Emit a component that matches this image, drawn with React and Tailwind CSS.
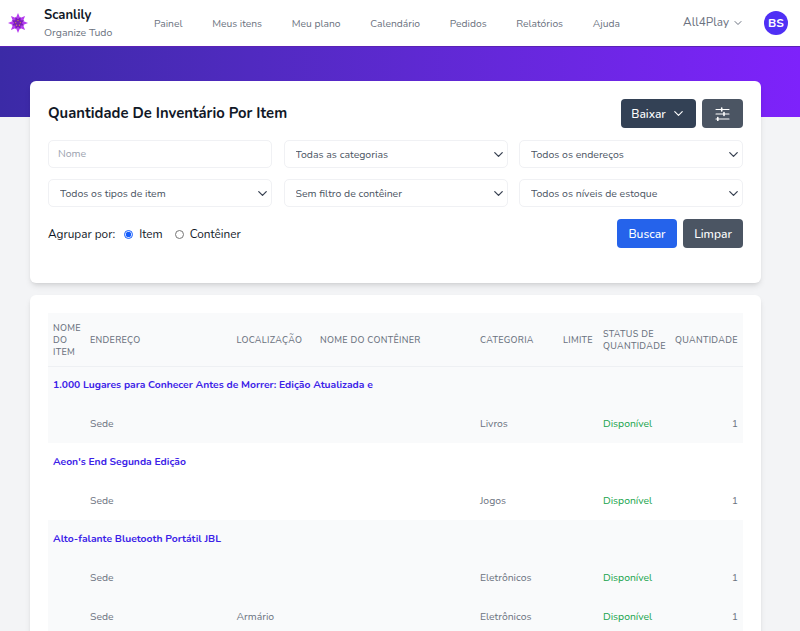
import React from "react";
import { ChevronDown } from "lucide-react";

const navItems = ["Painel", "Meus itens", "Meu plano", "Calendário", "Pedidos", "Relatórios", "Ajuda"];

const filters = [
  "Todas as categorias",
  "Todos os endereços",
  "Todos os tipos de item",
  "Sem filtro de contêiner",
  "Todos os níveis de estoque",
];

const groups = [
  {
    name: "1.000 Lugares para Conhecer Antes de Morrer: Edição Atualizada e",
    rows: [{ place: "", category: "Livros" }],
  },
  { name: "Aeon's End Segunda Edição", rows: [{ place: "", category: "Jogos" }] },
  {
    name: "Alto-falante Bluetooth Portátil JBL",
    rows: [
      { place: "", category: "Eletrônicos" },
      { place: "Armário", category: "Eletrônicos" },
    ],
  },
];

const STAR = "11,1 13.1,5.92 18.07,3.93 16.08,8.9 21,11 16.08,13.1 18.07,18.07 13.1,16.08 11,21 8.9,16.08 3.93,18.07 5.92,13.1 1,11 5.92,8.9 3.93,3.93 8.9,5.92";

const Logo = () => (
  <svg width="22" height="22" viewBox="0 0 22 22" className="shrink-0">
    <polygon fill="#b53df0" points={STAR} />
    <polygon fill="#7a1fb8" points={STAR} transform="rotate(22.5 11 11) translate(3.5 3.5) scale(0.68)" />
    <circle cx="11" cy="8.6" r="0.6" fill="#d9a441" />
    <circle cx="8.7" cy="10.6" r="0.6" fill="#d9a441" />
    <circle cx="13.3" cy="10.6" r="0.6" fill="#d9a441" />
    <circle cx="9.6" cy="13.2" r="0.6" fill="#d9a441" />
    <circle cx="12.4" cy="13.2" r="0.6" fill="#d9a441" />
  </svg>
);

const FilterIcon = () => (
  <svg width="15" height="14" viewBox="0 0 15 14" fill="none" stroke="white" strokeWidth="1.1" strokeLinecap="round">
    <path d="M1 2.5h13M1 7h13M1 12h13" />
    <path d="M6.7 1v3M9 5.5v3M2.8 10.5v3" strokeWidth="1.6" />
  </svg>
);

const FilterSelect = ({ label }) => (
  <div className="relative">
    <select className="w-full h-[28px] appearance-none bg-white border border-[#f0f1f4] rounded-[5px] pl-[11px] pr-6 pt-[1px] text-[10.5px] text-[#4b5563] outline-none">
      <option>{label}</option>
    </select>
    <ChevronDown size={15} strokeWidth={2} className="absolute right-[2px] top-[7px] text-[#374151] pointer-events-none" />
  </div>
);

const App = () => {
  return (
    <div className="h-screen overflow-hidden bg-[#f3f4f6] font-['Nunito','Lato',sans-serif]">
      {/* HEADER */}
      <header className="h-[46px] bg-white flex items-center pl-[7px] pr-[12px]">
        <Logo />
        <div className="ml-[15px] w-[110px]">
          <p className="text-[13px] font-bold text-[#111827] leading-[17px]">Scanlily</p>
          <p className="mt-[2px] text-[10.5px] text-[#6b7280] leading-[14px]">Organize Tudo</p>
        </div>
        <nav className="flex gap-[29.7px] pt-[4px] text-[10.3px] text-[#6b7280]">
          {navItems.map((item) => (
            <a key={item}>{item}</a>
          ))}
        </nav>
        <div className="ml-auto flex items-center">
          <span className="text-[11.8px] text-[#6b7280]">All4Play</span>
          <ChevronDown size={12} strokeWidth={2} className="ml-[3px] text-[#6b7280]" />
          <div className="ml-[20px] w-[24px] h-[24px] rounded-full bg-[#4f2ff5] text-white text-[12px] font-bold flex items-center justify-center">
            BS
          </div>
        </div>
      </header>

      {/* BANNER */}
      <div className="h-[71px] bg-gradient-to-r from-[#3b2aa6] to-[#7e22fb] border-t border-[#5b21b6]" />

      <main className="relative -mt-[36px] px-[30px] mr-[9px]">
        {/* FILTER CARD */}
        <section className="h-[202px] bg-white rounded-[6px] shadow-md p-[18px]">
          <div className="flex items-center justify-between">
            <h1 className="text-[14.8px] font-bold text-[#111827]">Quantidade De Inventário Por Item</h1>
            <div className="flex gap-[6px]">
              <button className="h-[29px] w-[75px] rounded-[4px] bg-[#334155] text-white text-[12px] font-medium flex items-center justify-center gap-[5px]">
                Baixar <ChevronDown size={15} strokeWidth={1.8} />
              </button>
              <button className="h-[29px] w-[41px] rounded-[4px] bg-[#4b5563] flex items-center justify-center">
                <FilterIcon />
              </button>
            </div>
          </div>

          <div className="mt-[12px] grid grid-cols-3 gap-x-[11.5px] gap-y-[11px]">
            <input
              placeholder="Nome"
              className="h-[28px] w-full bg-white border border-[#f0f1f4] rounded-[5px] px-[9px] pb-[1px] text-[10.5px] placeholder:text-[#9ca3af] outline-none"
            />
            {filters.map((label) => (
              <FilterSelect key={label} label={label} />
            ))}
          </div>

          <div className="mt-[12px] flex items-center">
            <div className="flex items-center pt-[2px] text-[11.8px] text-[#111827]">
              <span>Agrupar por:</span>
              <label className="ml-[9px] flex items-center">
                <input type="radio" name="group" defaultChecked className="w-[9px] h-[9px] accent-blue-600 m-0" />
                <span className="ml-[6px]">Item</span>
              </label>
              <label className="ml-[12px] flex items-center">
                <input type="radio" name="group" className="w-[9px] h-[9px] m-0" />
                <span className="ml-[6px]">Contêiner</span>
              </label>
            </div>
            <div className="ml-auto flex gap-[6px]">
              <button className="h-[29px] w-[60px] rounded-[4px] bg-[#2563eb] text-white text-[12px] font-medium">Buscar</button>
              <button className="h-[29px] w-[60px] rounded-[4px] bg-[#4b5563] text-white text-[12px] font-medium">Limpar</button>
            </div>
          </div>
        </section>

        {/* TABLE CARD */}
        <section className="mt-[12px] bg-white rounded-[6px] shadow-md p-[18px]">
          <table className="w-full table-fixed text-[10.4px] text-[#6b7280]">
            <colgroup>
              <col className="w-[37px]" />
              <col className="w-[146.5px]" />
              <col className="w-[83.5px]" />
              <col className="w-[160px]" />
              <col className="w-[83px]" />
              <col className="w-[40px]" />
              <col className="w-[72px]" />
              <col className="w-[73px]" />
            </colgroup>
            <thead className="bg-[#f9fafb] border-b border-[#eef0f3]">
              <tr className="h-[53px] text-[9px] tracking-[0.3px] leading-[12px] text-left">
                <th className="px-[5px] pt-[2px] font-medium">NOME DO ITEM</th>
                <th className="px-[5px] pt-[2px] font-medium">ENDEREÇO</th>
                <th className="px-[5px] pt-[2px] font-medium">LOCALIZAÇÃO</th>
                <th className="px-[5px] pt-[2px] font-medium">NOME DO CONTÊINER</th>
                <th className="px-[5px] pt-[2px] font-medium">CATEGORIA</th>
                <th className="px-[5px] pt-[2px] font-medium">LIMITE</th>
                <th className="px-[5px] pt-[2px] font-medium">STATUS DE QUANTIDADE</th>
                <th className="px-[5px] pt-[2px] font-medium">QUANTIDADE</th>
              </tr>
            </thead>
            {groups.map((group, i) => (
              <tbody key={group.name} className={i % 2 === 0 ? "bg-[#f9fafb]" : "bg-white"}>
                <tr className="h-[38.5px]">
                  <td colSpan={8} className="px-[5px] pt-[1px] text-[10.3px] font-bold text-[#3b21e8]">
                    {group.name}
                  </td>
                </tr>
                {group.rows.map((row, j) => (
                  <tr key={j} className="h-[38.5px]">
                    <td />
                    <td className="px-[5px] pt-[1px]">Sede</td>
                    <td className="px-[5px] pt-[1px]">{row.place}</td>
                    <td />
                    <td className="px-[5px] pt-[1px]">{row.category}</td>
                    <td />
                    <td className="px-[5px] pt-[1px] text-[#16a34a]">Disponível</td>
                    <td className="px-[5px] pt-[1px] text-right">1</td>
                  </tr>
                ))}
              </tbody>
            ))}
          </table>
        </section>
      </main>
    </div>
  );
};

export default App;
